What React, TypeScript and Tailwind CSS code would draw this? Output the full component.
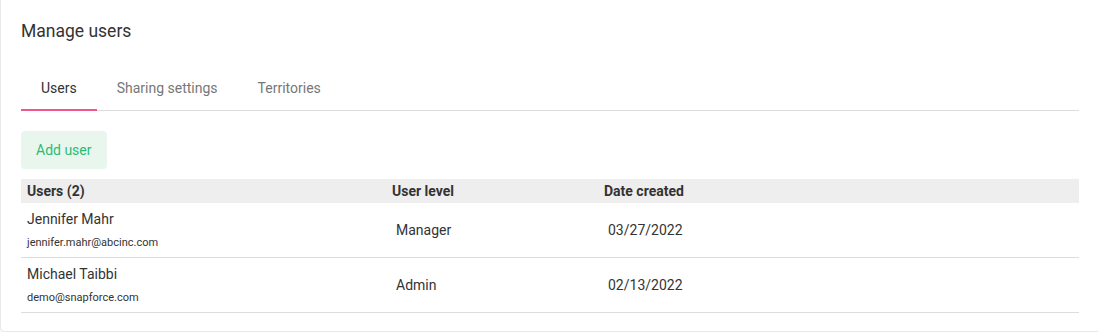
const users = [
  { name: "Jennifer Mahr", email: "jennifer.mahr@abcinc.com", level: "Manager", created: "03/27/2022" },
  { name: "Michael Taibbi", email: "demo@snapforce.com", level: "Admin", created: "02/13/2022" },
];

const tabs = ["Users", "Sharing settings", "Territories"];

export default function App() {
  return (
    <div className="w-[1098px] h-[333px] bg-white font-['Roboto',sans-serif]">
      <div className="h-[332px] border-l border-b border-[#e8e8e8] rounded-bl-[4px] pl-5 pr-[19px] pt-[20px]">
        {/* Title */}
        <h1 className="text-[17.5px] leading-[22px] text-[#333333]">Manage users</h1>

        {/* Tabs */}
        <div className="mt-[36px] flex border-b border-[#dddddd]">
          {tabs.map((tab, i) => (
            <button
              key={tab}
              className={
                i === 0
                  ? "px-5 pb-[11px] text-[14px] leading-[20px] text-[#333333] border-b-2 border-[#f0578a] -mb-px"
                  : "px-5 pb-[11px] text-[14px] leading-[20px] text-[#777777] border-b-2 border-transparent -mb-px"
              }
            >
              {tab}
            </button>
          ))}
        </div>

        {/* Add user */}
        <button className="mt-[20px] h-[38px] px-[15px] rounded-[4px] bg-[#e8f6ee] text-[14px] text-[#2dbb73]">
          Add user
        </button>

        {/* Table */}
        <div className="mt-[10px]">
          <div className="grid grid-cols-[365px_212px_1fr] h-[24px] items-center bg-[#eeeeee] text-[14px] font-bold text-[#333333]">
            <div className="pl-[6px]">Users (2)</div>
            <div className="pl-[6px]">User level</div>
            <div className="pl-[6px]">Date created</div>
          </div>
          {users.map((u) => (
            <div
              key={u.email}
              className="grid grid-cols-[365px_212px_1fr] h-[55px] items-center border-b border-[#dddddd] text-[#333333]"
            >
              <div className="pl-[6px] flex flex-col gap-[8px]">
                <span className="text-[14px] leading-[18px]">{u.name}</span>
                <span className="text-[11px] leading-[14px]">{u.email}</span>
              </div>
              <div className="pl-[10px] text-[14px]">{u.level}</div>
              <div className="pl-[10px] text-[14px]">{u.created}</div>
            </div>
          ))}
        </div>
      </div>
    </div>
  );
}
